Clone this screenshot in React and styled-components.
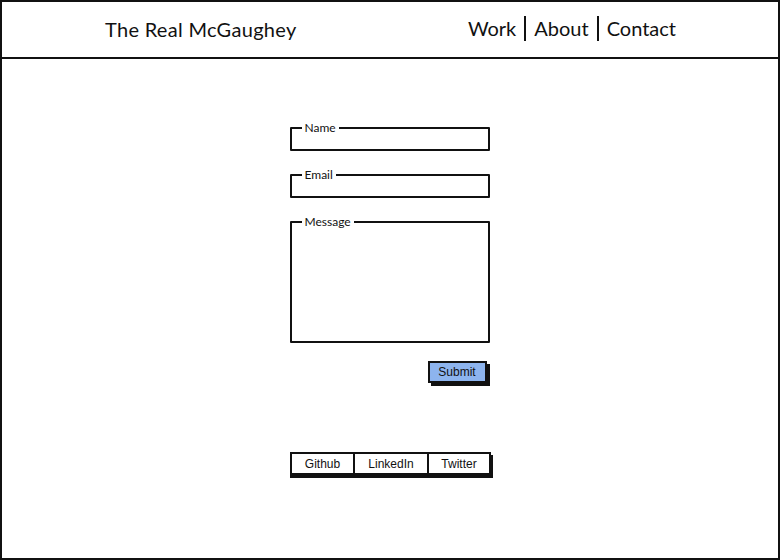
import React from "react";
import styled, { createGlobalStyle } from "styled-components";

const GlobalStyle = createGlobalStyle`
  html, body {
    margin: 0;
    padding: 0;
    background: #fff;
  }
  body {
    font-family: "Lato", "Open Sans", sans-serif;
    color: #111;
  }
`;

const Frame = styled.div`
  box-sizing: border-box;
  width: 780px;
  height: 560px;
  border: 2px solid #111;
  display: flex;
  flex-direction: column;
`;

const Header = styled.header`
  box-sizing: border-box;
  height: 57px;
  border-bottom: 2px solid #111;
  display: flex;
  align-items: center;
  justify-content: space-between;
  padding: 0 102px 2px 103px;
`;

const Title = styled.h1`
  margin: 0;
  font-size: 20px;
  font-weight: 400;
  letter-spacing: 0.3px;
`;

const Nav = styled.nav`
  display: flex;
  align-items: center;
`;

const NavLink = styled.a`
  font-size: 20px;
  color: #111;
  text-decoration: none;
  padding: 0 8px;
  line-height: 25px;
  border-left: ${(p) => (p.$first ? "none" : "2px solid #111")};
  &:first-child {
    padding-left: 0;
  }
  &:last-child {
    padding-right: 0;
  }
`;

const Main = styled.main`
  flex: 1;
  display: flex;
  flex-direction: column;
  align-items: center;
  padding-top: 62px;
`;

const Form = styled.form`
  width: 200px;
  display: flex;
  flex-direction: column;
  gap: 17px;
  margin-left: -1px;
`;

const Field = styled.fieldset`
  margin: 0;
  padding: 0;
  border: 2px solid #111;
  border-radius: 1px;
  min-width: 0;
`;

const Legend = styled.legend`
  font-size: 12px;
  line-height: 14px;
  padding: 0 3px;
  margin-left: 10px;
`;

const Input = styled.input`
  box-sizing: border-box;
  display: block;
  width: 100%;
  height: 14px;
  border: none;
  outline: none;
  background: transparent;
  font: inherit;
`;

const Area = styled.textarea`
  box-sizing: border-box;
  display: block;
  width: 100%;
  height: 112px;
  border: none;
  outline: none;
  resize: none;
  background: transparent;
  font: inherit;
`;

const Actions = styled.div`
  display: flex;
  justify-content: flex-end;
  padding-right: 3px;
  margin-top: 1px;
`;

const SubmitButton = styled.button`
  box-sizing: border-box;
  width: 59px;
  height: 22px;
  background: #8db4ee;
  border: 2px solid #111;
  box-shadow: 3px 3px 0 #111;
  font-family: "Liberation Sans", Arial, sans-serif;
  font-size: 12px;
  color: #111;
  padding: 0;
`;

const Bar = styled.div`
  display: flex;
  margin-top: 69px;
  margin-left: 1px;
  border: 2px solid #111;
  box-shadow: 0 3px 0 #111, 2px 3px 0 #111;
`;

const BarItem = styled.a`
  box-sizing: border-box;
  width: ${(p) => p.$w}px;
  height: 19px;
  display: flex;
  align-items: center;
  justify-content: center;
  font-family: "Liberation Sans", Arial, sans-serif;
  font-size: 12px;
  color: #111;
  text-decoration: none;
  & + & {
    border-left: 2px solid #111;
  }
`;

export default function App() {
  return (
    <>
      <GlobalStyle />
      <Frame>
        <Header>
          <Title>The Real McGaughey</Title>
          <Nav>
            <NavLink $first href="#">Work</NavLink>
            <NavLink href="#">About</NavLink>
            <NavLink href="#">Contact</NavLink>
          </Nav>
        </Header>
        <Main>
          <Form onSubmit={(e) => e.preventDefault()}>
            <Field>
              <Legend>Name</Legend>
              <Input />
            </Field>
            <Field>
              <Legend>Email</Legend>
              <Input />
            </Field>
            <Field>
              <Legend>Message</Legend>
              <Area />
            </Field>
            <Actions>
              <SubmitButton type="submit">Submit</SubmitButton>
            </Actions>
          </Form>
          <Bar>
            <BarItem $w={61} href="#">Github</BarItem>
            <BarItem $w={74} href="#">LinkedIn</BarItem>
            <BarItem $w={62} href="#">Twitter</BarItem>
          </Bar>
        </Main>
      </Frame>
    </>
  );
}
